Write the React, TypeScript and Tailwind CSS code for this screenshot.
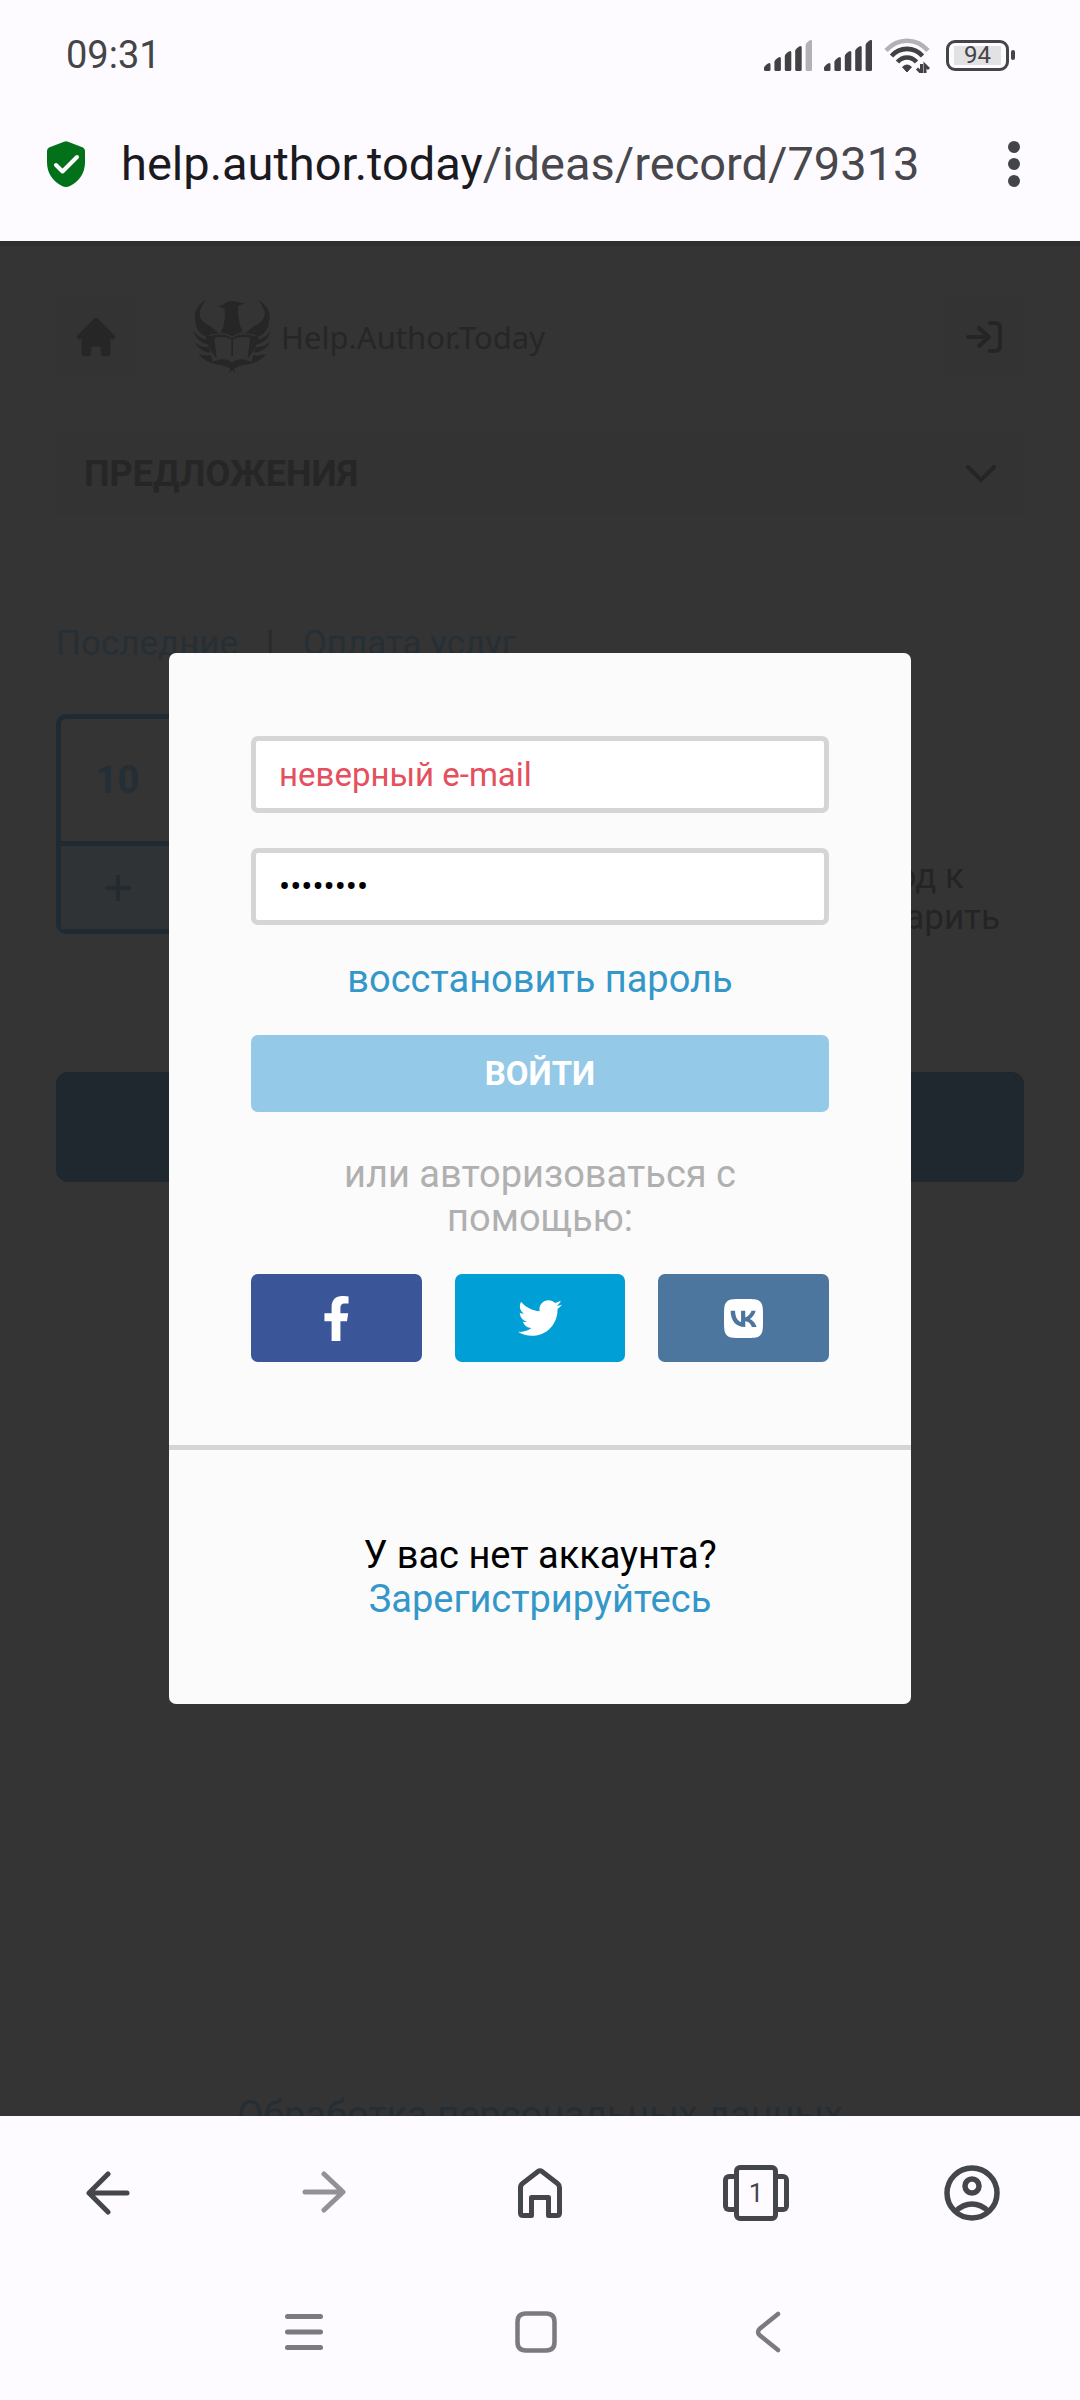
import { FaFacebookF, FaTwitter } from 'react-icons/fa';
import { HiHome } from 'react-icons/hi';
import { SiVk } from 'react-icons/si';

const SignalIcon = ({ level }: { level: number }) => {
  const tops = [23, 17, 11, 6, 0];

  return (
    <svg viewBox="0 0 48 31" className="h-[31px] w-12" fill="#414143">
      {tops.map((top, i) => (
        <path
          key={top}
          d={`M${i * 10.4} ${top + 5}q0-2 4-4.500q2.500-1.500 2.500 1V29.500q0 1.500-1.500 1.500h-3.500q-1.500 0-1.500-1.500z`}
          fill={i < level ? '#414143' : '#b2b1b4'}
        />
      ))}
    </svg>
  );
};

const WifiIcon = () => (
  <svg viewBox="0 0 46 35" className="h-[35px] w-[46px]" fill="none" strokeWidth="4.600">
    <path d="M2 12.500C14-.500 32-.500 44 12.500" stroke="#b2b1b4" />
    <path d="M7.500 18C16 8.500 30 8.500 38.500 18" stroke="#414143" />
    <path d="M13.500 24C19 18 27 18 32.500 24" stroke="#414143" />
    <path d="M18.500 29q4.500-4 9 0l-4.500 5z" fill="#414143" stroke="#414143" strokeWidth="1" />
    <path d="M37.500 26v9l-4.500-4.500M41 35v-8l4 4" stroke="#414143" strokeWidth="3" />
  </svg>
);

const PhoenixLogo = () => (
  <svg viewBox="24 22 242 226" className="h-[75px] w-[81px]" fill="#262626">
    {/* Head and neck */}
    <path d="M103 44q14-2 20-10q14-10 34-4q12 3 25 5q-10 3-20 8q-2 22 2 40q2 20 12 38q-18 4-33 16q-14-12-33-15q12-22 12-50q1-12-2-22q-10-1-17-6z" />
    {/* Body behind the book */}
    <path d="M62 108q2 90 82 124q80-34 82-124l-24 18q-36-6-58 10q-22-16-58-10z" />
    {/* Left wing */}
    <path d="M66 24q-38 46-4 70q26 16 44 32q-14 0-28 2q-36-12-46-46q-6-34 34-58z" />
    <path d="M32 82q8 32 46 46q-6 8-14 8q-30-14-32-54z" />
    <path d="M28 117q12 22 42 28l3 15q-38-8-45-43z" />
    <path d="M29 150q18 18 46 18l3 16q-34-4-49-34z" />
    <path d="M42 188q18 6 38 3l5 19q34-10 58 14q8 8 11 22q-20-24-53-27q-38-4-59-31z" />
    {/* Right wing */}
    <path d="M222 24q38 46 4 70q-26 16-44 32q14 0 28 2q36-12 46-46q6-34-34-58z" />
    <path d="M256 82q-8 32-46 46q6 8 14 8q30-14 32-54z" />
    <path d="M260 117q-12 22-42 28l-3 15q38-8 45-43z" />
    <path d="M259 150q-18 18-46 18l-3 16q34-4 49-34z" />
    <path d="M246 188q-18 6-38 3l-5 19q-34-10-58 14q-8 8-11 22q20-24 53-27q38-4 59-31z" />
    {/* Book */}
    <path d="M74 132q46-12 70 6q24-18 70-6" fill="none" stroke="#343434" strokeWidth="4" />
    <path
      d="M144 146q-22-16-54-6l8 66q30-8 46 8q16-16 46-8l8-66q-32-10-54 6z"
      fill="#343434"
    />
    <path d="M144 146v48" stroke="#262626" strokeWidth="5" />
  </svg>
);

const StatusBar = () => (
  <div className="flex h-[110px] items-center justify-between pl-[66px] pr-[65px] text-[38px] text-[#454447]">
    <span>09:31</span>
    <div className="flex items-center gap-3">
      <SignalIcon level={4} />
      <SignalIcon level={5} />
      <WifiIcon />
      <div className="ml-1 flex items-center gap-[2px]">
        <div className="flex h-[31px] w-[63px] items-center justify-center rounded-[9px] border-3 border-[#454447] p-[3px]">
          <span className="flex h-full w-[47px] items-center justify-center bg-[#e2e1e4] text-[24px] leading-none">
            94
          </span>
        </div>
        <div className="h-[10px] w-[4px] rounded-[2px] bg-[#454447]" />
      </div>
    </div>
  </div>
);

const AddressBar = () => (
  <div className="flex h-[108px] items-center pl-[47px] pr-[48px]">
    <svg viewBox="0 0 38 46" className="h-[46px] w-[38px]">
      <path
        d="M17 .700q2-1 4 0L36 6.500q2 1 2 3.500V21q0 16-15 24q-4 2-8 0Q0 37 0 21V10q0-2.500 2-3.500z"
        fill="#03711a"
      />
      <path
        d="M9 24l6.500 6.500L30 16"
        fill="none"
        stroke="#fff"
        strokeWidth="4"
        strokeLinecap="round"
        strokeLinejoin="round"
      />
    </svg>
    <div className="ml-9 flex-1 text-[47px] text-[#47474c]">
      <span className="text-[#1b1a1e]">help.author.today</span>/ideas/record/79313
    </div>
    <button aria-label="Меню" className="flex w-9 flex-col items-center gap-[5px]">
      <span className="size-3 rounded-full bg-[#44454a]" />
      <span className="size-3 rounded-full bg-[#44454a]" />
      <span className="size-3 rounded-full bg-[#44454a]" />
    </button>
  </div>
);

const SitePage = () => (
  <div className="flex flex-1 flex-col px-14 pt-[57px] text-[35px] leading-[44px] text-[#242424]">
    <div className="flex h-[77px] items-center">
      <a href="#" aria-label="Главная" className="flex h-full w-20 items-center justify-center bg-[#333333]">
        <HiHome className="size-[48px] text-[#262626]" />
      </a>
      <a href="#" className="ml-14 flex items-center gap-2 text-[#262626]">
        <PhoenixLogo />
        <span className="font-['Noto_Sans',sans-serif] text-[31px]">Help.Author.Today</span>
      </a>
      <a href="#" aria-label="Вход" className="ml-auto flex h-full w-20 items-center justify-center bg-[#333333]">
        <svg
          viewBox="0 0 36 32"
          className="h-8 w-9"
          fill="none"
          stroke="#252525"
          strokeWidth="4"
          strokeLinecap="round"
          strokeLinejoin="round"
        >
          <path d="M2 16h21M13 7l10 9-10 9M24 2h5q5 0 5 5v18q0 5-5 5h-5" />
        </svg>
      </a>
    </div>

    <button className="mt-[57px] flex h-[83px] items-center justify-between bg-[#333333] px-7 text-[36px] font-bold text-[#262626]">
      ПРЕДЛОЖЕНИЯ
      <svg
        viewBox="0 0 30 18"
        className="h-[18px] w-[30px]"
        fill="none"
        stroke="#252525"
        strokeWidth="4"
        strokeLinecap="round"
      >
        <path d="M2 2l13 13L28 2" />
      </svg>
    </button>

    <div className="mt-[107px] flex text-[#262f36]">
      <a href="#">Последние</a>
      <span className="mx-7 text-[#292929]">|</span>
      <a href="#">Оплата услуг</a>
    </div>

    <div className="mt-12 flex items-start justify-between">
      <div className="flex h-[220px] w-[123px] flex-col rounded-[10px] border-5 border-[#202a32]">
        <div className="flex h-[122px] items-center justify-center text-[38px] font-bold text-[#232e36]">10</div>
        <button
          aria-label="Голосовать за"
          className="flex flex-1 items-center justify-center border-t-5 border-[#202a32] bg-[#303335]"
        >
          <svg viewBox="0 0 26 26" className="size-[26px]" stroke="#232b31" strokeWidth="4">
            <path d="M13 0v26M0 13h26" />
          </svg>
        </button>
      </div>
      <div className="flex flex-col items-end pr-6 pt-[142px] leading-[41px]">
        <span className="pr-9">вход к</span>
        <span>подарить</span>
      </div>
    </div>

    <button aria-label="Комментировать" className="mt-[134px] h-[110px] rounded-[12px] bg-[#20282f]" />

    <a href="#" className="-mb-[21px] mt-auto text-center text-[38px] text-[#252e34]">
      Обработка персональных данных
    </a>
  </div>
);

const LoginModal = () => (
  <div className="absolute inset-0 flex items-center justify-center">
    <div
      role="dialog"
      aria-label="Вход"
      className="w-[69%] max-w-[742px] rounded-[7px] bg-[#fbfbfb] text-center text-[38px] leading-[44px] text-black"
    >
      <form className="flex flex-col border-b-5 border-[#d5d5d5] px-[82px] py-[83px]">
        <input
          type="text"
          aria-label="E-mail"
          placeholder="неверный e-mail"
          className="h-[77px] rounded-[7px] border-5 border-[#d5d5d5] bg-white px-[23px] text-[33px] placeholder:text-[#e4505d]"
        />
        <input
          type="password"
          aria-label="Пароль"
          defaultValue="12345678"
          className="mt-[35px] h-[77px] rounded-[7px] border-5 border-[#d5d5d5] bg-white px-[23px] text-[33px]"
        />
        <a href="#" className="mt-8 text-[#3397c9]">восстановить пароль</a>
        <button type="button" className="mt-[34px] h-[77px] rounded-[7px] bg-[#94c9e8] text-[33px] font-bold text-white">
          ВОЙТИ
        </button>
        <p className="mt-10 px-10 text-[#b0b0b0]">или авторизоваться с помощью:</p>

        {/* Social buttons */}
        <div className="mt-[34px] grid grid-cols-3 gap-[33px] text-white">
          <button type="button" aria-label="Facebook" className="flex h-[88px] items-center justify-center rounded-[7px] bg-[#3b5698]">
            <FaFacebookF className="size-[45px]" />
          </button>
          <button type="button" aria-label="Twitter" className="flex h-[88px] items-center justify-center rounded-[7px] bg-[#009fd5]">
            <FaTwitter className="size-[44px]" />
          </button>
          <button type="button" aria-label="VK" className="flex h-[88px] items-center justify-center rounded-[7px] bg-[#4d769f]">
            <SiVk className="size-[39px]" />
          </button>
        </div>
      </form>
      <div className="flex flex-col px-[82px] py-[83px]">
        <span>У вас нет аккаунта?</span>
        <a href="#" className="text-[#3397c9]">Зарегистрируйтесь</a>
      </div>
    </div>
  </div>
);

const BrowserNav = () => (
  <nav className="grid h-[154px] grid-cols-5 place-items-center text-[#45464b]">
    <button aria-label="Назад">
      <svg
        viewBox="0 0 44 44"
        className="size-11"
        fill="none"
        stroke="currentColor"
        strokeWidth="5"
        strokeLinecap="round"
        strokeLinejoin="round"
      >
        <path d="M41 22H4M22 3L3 22l19 19" />
      </svg>
    </button>
    <button aria-label="Вперёд" className="text-[#929194]">
      <svg
        viewBox="0 0 44 44"
        className="size-11"
        fill="none"
        stroke="currentColor"
        strokeWidth="5"
        strokeLinecap="round"
        strokeLinejoin="round"
      >
        <path d="M3 21h37M22 3l19 18-19 18" />
      </svg>
    </button>
    <button aria-label="Домой">
      <svg
        viewBox="0 0 44 50"
        className="h-[50px] w-11"
        fill="none"
        stroke="currentColor"
        strokeWidth="5"
        strokeLinejoin="round"
      >
        <path d="M2.500 19.500q0-2.500 2-4L20 3.500q2-1.500 4 0l15.500 12q2 1.500 2 4V45q0 2.500-2.500 2.500h-8.500v-18h-17v18H5q-2.500 0-2.500-2.500z" />
      </svg>
    </button>
    <button aria-label="Вкладки" className="flex items-center">
      <span className="h-[38px] w-[11px] rounded-l-[6px] border-5 border-r-0 border-current" />
      <span className="flex h-[56px] w-11 items-center justify-center rounded-[6px] border-5 border-current text-[26px]">
        1
      </span>
      <span className="h-[38px] w-[11px] rounded-r-[6px] border-5 border-l-0 border-current" />
    </button>
    <button aria-label="Профиль">
      <svg viewBox="0 0 56 56" className="size-14" fill="none" stroke="currentColor" strokeWidth="5.500">
        <circle cx="28" cy="28" r="25" />
        <circle cx="28" cy="21" r="7" />
        <path d="M11.500 46.500Q19 39 28 39t16.500 7.500" />
      </svg>
    </button>
  </nav>
);

const SystemNav = () => (
  <div className="flex h-[130px] justify-center pb-[6px] pr-2 text-[#7c7a7e]">
    <div className="grid w-[65%] grid-cols-3 place-items-center">
      <button aria-label="Недавние">
        <svg viewBox="0 0 38 38" className="size-[38px]" stroke="currentColor" strokeWidth="5" strokeLinecap="round">
          <path d="M2.500 3.500h33M2.500 19h33M2.500 34.500h33" />
        </svg>
      </button>
      <button aria-label="Главный экран">
        <svg viewBox="0 0 42 42" className="size-[42px]" fill="none" stroke="currentColor" strokeWidth="4.500">
          <path d="M11 2.500h20q8.500 0 8.500 8.500v20q0 8.500-8.500 8.500H11q-8.500 0-8.500-8.500V11q0-8.500 8.500-8.500z" />
        </svg>
      </button>
      <button aria-label="Назад (система)">
        <svg
          viewBox="0 0 26 42"
          className="h-[42px] w-[26px]"
          fill="none"
          stroke="currentColor"
          strokeWidth="4.500"
          strokeLinecap="round"
        >
          <path d="M23 3L5 17.500q-4 3.500 0 7L23 39" />
        </svg>
      </button>
    </div>
  </div>
);

const App = () => {
  return (
    <div className="flex min-h-screen flex-col bg-[#fdfbff] font-[Roboto,sans-serif]">
      <header className="pb-[23px]">
        <StatusBar />
        <AddressBar />
      </header>
      <main className="relative flex flex-1 flex-col overflow-hidden bg-[#343434] shadow-[inset_0_5px_0_#2f2f2f]">
        <SitePage />
        <LoginModal />
      </main>
      <footer>
        <BrowserNav />
        <SystemNav />
      </footer>
    </div>
  );
};

export default App;
